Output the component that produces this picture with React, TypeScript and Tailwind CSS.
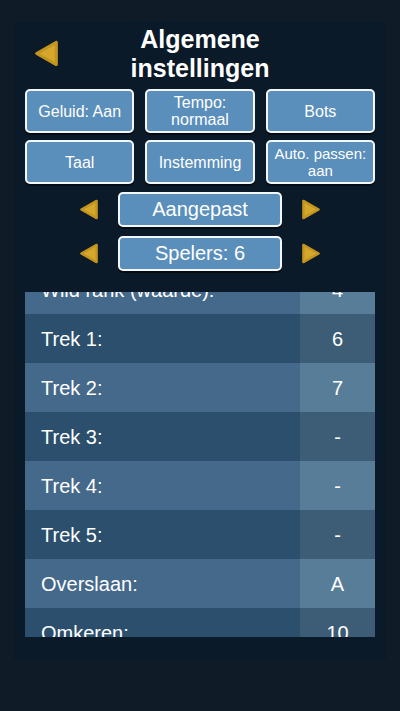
const rows = [
  { label: "Wild rank (kaart):", value: "J" },
  { label: "Wild rank (waarde):", value: "4" },
  { label: "Trek 1:", value: "6" },
  { label: "Trek 2:", value: "7" },
  { label: "Trek 3:", value: "-" },
  { label: "Trek 4:", value: "-" },
  { label: "Trek 5:", value: "-" },
  { label: "Overslaan:", value: "A" },
  { label: "Omkeren:", value: "10" },
  { label: "Aanvallen:", value: "-" },
];

function Tri({ dir, className }: { dir: "left" | "right"; className: string }) {
  return (
    <svg viewBox="0 0 20 22" className={className}>
      <path
        d={dir === "left" ? "M18 2 L18 20 L2 11 Z" : "M2 2 L2 20 L18 11 Z"}
        fill="#d5a72b"
        stroke="#c39520"
        strokeWidth="2.5"
        strokeLinejoin="round"
      />
    </svg>
  );
}

function Btn({ children, className = "" }: { children: React.ReactNode; className?: string }) {
  return (
    <button
      className={
        "flex items-center justify-center rounded-[5px] border-2 border-[#f4f7fa] bg-[#5a8ebb] text-center text-white leading-[17px] shadow-[0_2px_0_rgba(0,0,0,0.55)] " +
        className
      }
    >
      {children}
    </button>
  );
}

export default function App() {
  return (
    <div
      className="min-h-[711px] w-[400px] bg-[#0f1c27] pt-[22px]"
      style={{ fontFamily: '"Liberation Sans", Arial, sans-serif' }}
    >
      <div className="mx-[13px] h-[638px] bg-[#0a1a28] px-[12px]">
        {/* header */}
        <div className="relative flex h-[67px] items-start justify-center pt-[3px]">
          <Tri dir="left" className="absolute left-[9px] top-[18px] h-[27px] w-[25px]" />
          <h1 className="text-center text-[25px] font-bold leading-[29px] text-white">
            Algemene
            <br />
            instellingen
          </h1>
        </div>

        {/* option buttons */}
        <div className="grid grid-cols-3 gap-x-[11px] gap-y-[7px]">
          <Btn className="h-[44px] text-[16px]">Geluid: Aan</Btn>
          <Btn className="h-[44px] text-[16px]">
            Tempo:
            <br />
            normaal
          </Btn>
          <Btn className="h-[44px] text-[16px]">Bots</Btn>
          <Btn className="h-[44px] text-[16px]">Taal</Btn>
          <Btn className="h-[44px] text-[16px]">Instemming</Btn>
          <Btn className="h-[44px] text-[15px]">
            Auto. passen:
            <br />
            aan
          </Btn>
        </div>

        {/* selectors */}
        <div className="mt-[8px] flex flex-col gap-[9px]">
          {["Aangepast", "Spelers: 6"].map((t) => (
            <div key={t} className="flex items-center justify-center">
              <Tri dir="left" className="h-[21px] w-[20px]" />
              <Btn className="mx-[19px] h-[35px] w-[164px] text-[20px]">{t}</Btn>
              <Tri dir="right" className="h-[21px] w-[20px]" />
            </div>
          ))}
        </div>

        {/* rules table */}
        <div className="mt-[21px] h-[345px] overflow-hidden">
          <div className="-mt-[76px]">
            {rows.map((r, i) => {
              const dark = i % 2 === 0;
              return (
                <div
                  key={r.label}
                  className={"flex h-[49px] items-center text-[20px] text-white " + (dark ? "bg-[#2b4f6c]" : "bg-[#45698a]")}
                >
                  <div className="flex-1 pl-[16px]">{r.label}</div>
                  <div
                    className={"flex h-full w-[75px] items-center justify-center " + (dark ? "bg-[#3d5d77]" : "bg-[#587d99]")}
                  >
                    {r.value}
                  </div>
                </div>
              );
            })}
          </div>
        </div>
      </div>
    </div>
  );
}
